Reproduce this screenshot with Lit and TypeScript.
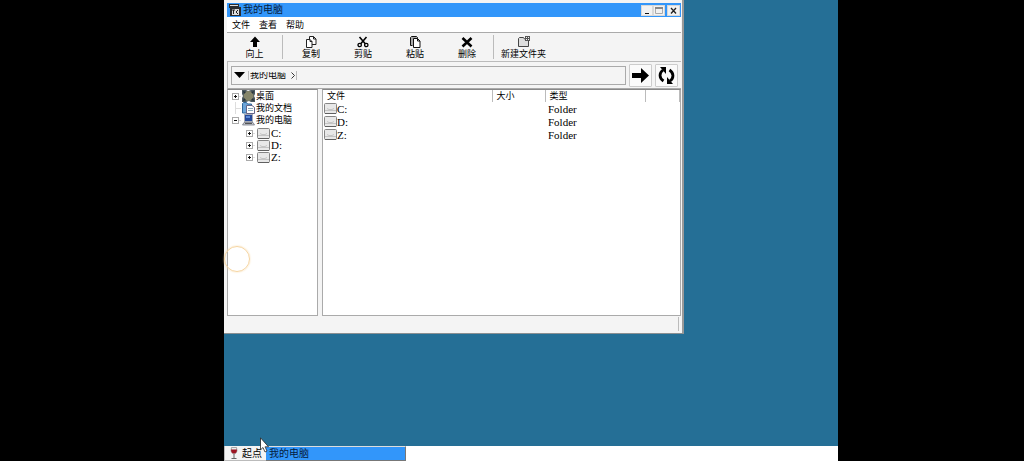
import { LitElement, html, css, svg } from "lit";
import { customElement } from "lit/decorators.js";

const drive = html`<svg class="drive" viewBox="0 0 13 11" width="13" height="11" aria-hidden="true">
  <rect x=".5" y=".5" width="12" height="10" rx="1" fill="#e8e8e8" stroke="#858585"/>
  <path d="M1 7.5h11M3 5.5l2 1h3l2-1" fill="none" stroke="#c4c4c4"/>
  <path d="M1 10.5h11" stroke="#606060"/>
</svg>`;

const expander = (open: boolean) => html`<svg viewBox="0 0 7 7" width="7" height="7" aria-hidden="true">
  <rect x=".5" y=".5" width="6" height="6" fill="#fff" stroke="#aaa"/>
  <path d=${open ? "M2 3.5h3" : "M2 3.5h3M3.5 2v3"} stroke="#111"/>
</svg>`;

const desktopIcon = html`<svg viewBox="0 0 13 12" width="13" height="12" aria-hidden="true">
  <path d="M0 0h4l2 1 3-1h4v4l-1 2 1 2v4H9l-2-1-3 1H0V8l1-2-1-2z" fill="#4c5a60"/>
  <ellipse cx="6.5" cy="6" rx="5" ry="5" fill="#85866a"/>
  <path d="M1 1l3 1-2 2zM12 1L9 2l2 2zM1 11l3-1-2-2zM12 11l-3-1 2-2z" fill="#27323a"/>
</svg>`;

const documentsIcon = html`<svg viewBox="0 0 13 12" width="13" height="12" aria-hidden="true">
  <path d="M.5 11V1.5l1-1h3l1 1.5h4V11z" fill="#6ba4d8" stroke="#2f6799"/>
  <path d="M4.5 3.5h5.500l2.500 2v6h-8z" fill="#fff" stroke="#668"/>
  <path d="M6 6.5h5M6 8.5h5" stroke="#8ab"/>
</svg>`;

const computerIcon = html`<svg viewBox="0 0 13 12" width="13" height="12" aria-hidden="true">
  <rect x="2.500" y=".5" width="8" height="7" fill="#24499a" stroke="#a5aab4"/>
  <path d="M4 2h4v2H4z" fill="#5c8ad6"/>
  <path d="M2 8.500h9l1.500 2.500H.5z" fill="#c7cad0" stroke="#666c78" stroke-width=".7"/>
  <path d="M3 9.500h7" stroke="#555"/>
</svg>`;

const toolIcons = {
  up: svg`<path d="M6 .5l5 5.500H8V11H4V6H1z" fill="#000"/>`,
  copy: svg`<path d="M4.500.5h4l2.500 2.500v5.500H4.500z" fill="#fff" stroke="#222"/><path d="M1.500 3.500h3.500L7 5.500v6H1.500z" fill="#fff" stroke="#222"/><path d="M8.500.5V3H11M5 3.500v2h2" fill="none" stroke="#222"/>`,
  cut: svg`<path d="M2.500 1L8.500 8M9.500 1L3.500 8" stroke="#000" stroke-width="1.600"/><circle cx="2.700" cy="9" r="1.700" fill="#f4f4f4" stroke="#000" stroke-width="1.300"/><circle cx="9.300" cy="9" r="1.700" fill="#f4f4f4" stroke="#000" stroke-width="1.300"/>`,
  paste: svg`<path d="M3.500 9.500h-2v-8l1-1h5l1 1V3" fill="#aaa" stroke="#111"/><path d="M4.500 2.500h4l2.500 2.500v6.500H4.500z" fill="#fff" stroke="#111"/><path d="M8.500 2.500V5H11" fill="none" stroke="#111"/>`,
  remove: svg`<path d="M1.500 2L10.500 10.500M10.500 2L1.500 10.500" stroke="#000" stroke-width="2.600"/>`,
  folder: svg`<path d="M.5 10.500v-8l1-1h4l1 1.500h4v7.500z" fill="#ddd" stroke="#444"/><rect x="7.500" y=".5" width="4" height="4" fill="#f4f4f4" stroke="#555"/><path d="M9.500 1v3M8 2.500h3" stroke="#555"/>`,
};

@customElement("app-root")
export class AppRoot extends LitElement {
  static styles = css`
    :host { display: block; font: 9px/12px "Liberation Sans", "Noto Sans CJK SC", sans-serif; color: #000; }
    * { box-sizing: border-box; }
    button, a { font: inherit; color: inherit; border: 0; padding: 0; margin: 0; background: none; text-decoration: none; }
    svg { display: block; flex: none; }
    .screen { display: grid; grid-template-columns: 224px 1fr 186px; min-height: 100vh; background: #000; }
    .session { grid-column: 2; display: flex; flex-direction: column; background: #256f96; position: relative; }
    .desktop { flex: 1; display: flex; padding-bottom: 112px; }
    .window { width: 74.9%; display: flex; flex-direction: column; background: #f4f4f4; border-right: 2px solid #999; border-bottom: 1px solid #8a8f92; padding: 3px 1px 0 3px; }
    .title { display: flex; align-items: center; height: 14px; background: #3296fa; color: #06203c; font-size: 10px; padding-left: 2px; gap: 2px; }
    .title h1 { flex: 1; font: inherit; margin: 0; }
    .controls { display: flex; padding-right: 1px; }
    .controls button { width: 12px; height: 11px; background: #f2f2f2; border: 1px solid #d8d8d8; }
    .controls .close { width: 13px; margin-left: 2px; }
    .menu { display: flex; gap: 9px; background: #fff; height: 16px; padding: 2px 5px; border-bottom: 1px solid #aaa; }
    .tools { display: flex; align-items: center; height: 29px; border-bottom: 1px solid #bbb; }
    .tool { width: 52px; height: 24px; display: flex; flex-direction: column; align-items: center; }
    .tool svg { margin-top: 1px; }
    .tool.first { width: 56px; margin-right: 2px; border-right: 1px solid #bbb; }
    .tool.wide { width: 60px; border-left: 1px solid #bbb; }
    .address { display: flex; align-items: center; gap: 3px; height: 27px; padding: 0 3px; border-left: 1px solid #bbb; border-bottom: 1px solid #aaa; }
    .path { flex: 1; height: 19px; display: flex; align-items: center; gap: 3px; border: 1px solid #aaa; padding-left: 2px; }
    .crumb { height: 9px; display: flex; align-items: center; gap: 5px; overflow: hidden; border: solid #bbb; border-width: 0 1px; padding: 0 1px; }
    .clip { height: 7px; display: flex; align-items: center; overflow: hidden; }
    .go { width: 23px; height: 23px; display: grid; place-items: center; background: #fafafa; border: 1px solid #ccc; border-radius: 1px; }
    .panes { flex: 1; display: grid; grid-template-columns: 91px 1fr; gap: 4px; }
    .pane { background: #fff; border: 1px solid #aaa; border-top-color: #888; }
    .tree, .tree ul { list-style: none; margin: 0; }
    .tree { padding: 0 0 0 4px; }
    .tree ul { padding: 1px 0 0 14px; }
    .node { display: flex; align-items: center; height: 12px; gap: 1px; white-space: nowrap; }
    .twig { width: 9px; height: 12px; display: flex; align-items: center; background: linear-gradient(#ddd, #ddd) 3px 6px / 6px 1px no-repeat; }
    .twig.line { background: linear-gradient(#ddd, #ddd) 3px 6px / 6px 1px no-repeat, linear-gradient(#ddd, #ddd) 3px 0 / 1px 12px no-repeat; }
    .tree ul .twig { width: 10px; }
    .latin { font-family: "Liberation Serif", serif; font-size: 11px; }
    table { width: 100%; border-collapse: collapse; table-layout: fixed; }
    th, td { text-align: left; font-weight: normal; padding: 0 0 0 4px; height: 13px; line-height: 12px; }
    th { height: 12px; border-right: 1px solid #bbb; }
    td { padding-left: 3px; }
    td.name { padding-left: 1px; }
    .file { display: flex; align-items: center; height: 13px; }
    .c1 { width: 169px; } .c2 { width: 53px; } .c3 { width: 100px; }
    .status { height: 17px; display: flex; justify-content: flex-end; padding: 1px 2px 2px 0; }
    .grip { border-left: 1px solid #bbb; }
    .taskbar { height: 15px; display: flex; background: #fff; font-size: 10px; line-height: 13px; }
    .start { width: 42px; display: flex; align-items: center; gap: 4px; background: #f4f4f4; padding-left: 5px; border: solid #bbb; border-width: 0 0 1px 1px; white-space: nowrap; }
    .task { width: 140px; text-align: left; background: #3296fa; color: #06203c; border: solid #777; border-width: 1px 1px 1px 0; border-top-color: #ddd; padding-left: 3px; }
    .touch { position: absolute; left: 0; top: 246px; width: 26px; height: 26px; border: 1px solid #f6d5a1; border-radius: 50%; box-shadow: 0 0 2px #f8dcae; pointer-events: none; }
    .cursor { position: absolute; left: 36px; bottom: 8px; pointer-events: none; }
  `;

  private tool(icon: keyof typeof toolIcons, label: string, extra = "") {
    return html`<button class="tool ${extra}"><svg viewBox="0 0 12 12" width="12" height="12" aria-hidden="true">${toolIcons[icon]}</svg>${label}</button>`;
  }

  render() {
    const drives = ["C:", "D:", "Z:"];
    return html`<div class="screen"><main class="session">
      <div class="desktop"><section class="window">
        <header class="title">
          <svg viewBox="0 0 12 12" width="12" height="12" aria-hidden="true"><path d="M0 0h10v3h2v9H1V4H0z" fill="#2a2d30"/><path d="M1 1h8v1H1zM3 5h7v6H3z" fill="#ddd"/><path d="M3 6h3M4.500 6v4M9 6L7 8l2 2M10 10h1" stroke="#222" fill="none"/></svg>
          <h1>我的电脑</h1>
          <div class="controls">
            <button aria-label="最小化"><svg viewBox="0 0 10 9" width="10" height="9"><path d="M3 7.500h4" stroke="#111"/></svg></button>
            <button aria-label="最大化"><svg viewBox="0 0 10 9" width="10" height="9"><path d="M1.500 2v5.500h7V2" fill="none" stroke="#aaa"/><path d="M1 2h8" stroke="#888" stroke-width="2"/></svg></button>
            <button class="close" aria-label="关闭"><svg viewBox="0 0 11 9" width="11" height="9"><path d="M3 2l5 5.500M8 2L3 7.500" stroke="#222" stroke-width="1.300"/></svg></button>
          </div>
        </header>
        <nav class="menu"><button>文件</button><button>查看</button><button>帮助</button></nav>
        <div class="tools">
          ${this.tool("up", "向上", "first")}${this.tool("copy", "复制")}${this.tool("cut", "剪贴")}${this.tool("paste", "粘贴")}${this.tool("remove", "删除")}${this.tool("folder", "新建文件夹", "wide")}
        </div>
        <div class="address">
          <div class="path">
            <svg viewBox="0 0 11 6" width="11" height="6" aria-hidden="true"><path d="M0 0h11L5.500 6z" fill="#000"/></svg>
            <a class="crumb" href="#"><span class="clip">我的电脑</span><svg viewBox="0 0 4 7" width="4" height="7" aria-hidden="true"><path d="M.5.5l3 3-3 3" fill="none" stroke="#333"/></svg></a>
          </div>
          <button class="go" aria-label="转到"><svg viewBox="0 0 17 15" width="17" height="15"><path d="M0 5h9V0l8 7.500L9 15v-5H0z" fill="#000"/></svg></button>
          <button class="go" aria-label="刷新"><svg viewBox="0 0 17 17" width="17" height="17"><path d="M5.500 14C1 11 1 6 5 3M11.500 3c4.500 3 4.500 8 .5 11" fill="none" stroke="#000" stroke-width="2.800"/><path d="M2 0h6v7zM15 17H9v-7z" fill="#000"/></svg></button>
        </div>
        <div class="panes">
          <div class="pane"><ul class="tree">
            <li class="node"><span class="twig">${expander(false)}</span>${desktopIcon}<span>桌面</span></li>
            <li class="node"><span class="twig line"></span>${documentsIcon}<span>我的文档</span></li>
            <li><div class="node"><span class="twig">${expander(true)}</span>${computerIcon}<span>我的电脑</span></div>
              <ul>${drives.map((d) => html`<li class="node"><span class="twig">${expander(false)}</span>${drive}<span class="latin">${d}</span></li>`)}</ul>
            </li>
          </ul></div>
          <div class="pane"><table>
            <colgroup><col class="c1"><col class="c2"><col class="c3"><col></colgroup>
            <thead><tr><th>文件</th><th>大小</th><th>类型</th><th></th></tr></thead>
            <tbody>${drives.map((d) => html`<tr><td class="name"><div class="file">${drive}<span class="latin">${d}</span></div></td><td></td><td class="latin">Folder</td><td></td></tr>`)}</tbody>
          </table></div>
        </div>
        <footer class="status"><span class="grip"></span></footer>
      </section></div>
      <footer class="taskbar">
        <button class="start"><svg viewBox="0 0 8 12" width="8" height="12" aria-hidden="true"><path d="M1.500.5h5L7 4Q6 7 4 7T1 4z" fill="#eee" stroke="#888" stroke-width=".7"/><path d="M1 2.500h6Q7 6.500 4 6.500T1 2.500z" fill="#9c1522"/><path d="M4 7v4M1.500 11.500h5" stroke="#666"/></svg>起点</button>
        <button class="task">我的电脑</button>
      </footer>
      <span class="touch"></span>
      <svg class="cursor" viewBox="0 0 9 16" width="9" height="16" aria-hidden="true"><path d="M.5.8v12l2.500-2.300 2 4.500 2-1-2-4.200h3.500z" fill="#fff" stroke="#222" stroke-width=".8"/></svg>
    </main></div>`;
  }
}
